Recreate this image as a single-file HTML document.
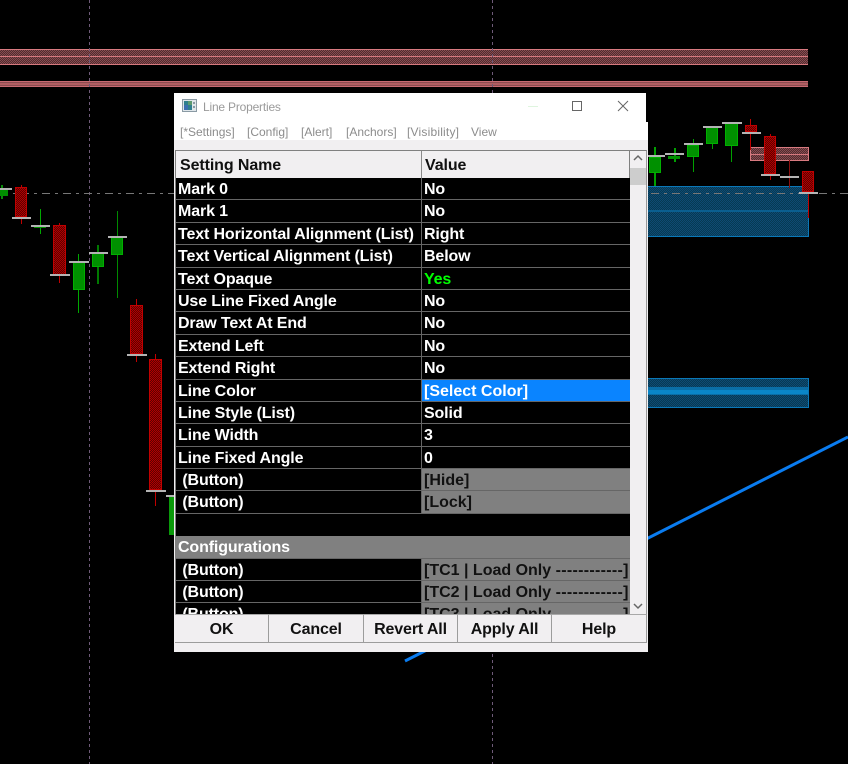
<!DOCTYPE html>
<html><head><meta charset="utf-8">
<style>
html,body{margin:0;padding:0;background:#000;width:848px;height:764px;overflow:hidden}
body{position:relative;font-family:"Liberation Sans",Arial,sans-serif}
svg.bg{position:absolute;left:0;top:0}
.tb{position:absolute;left:174px;top:93px;width:472px;height:29px;background:#fff}
.mn{position:absolute;left:174px;top:122px;width:474px;height:18px;background:#fff}
.body{position:absolute;left:174px;top:140px;width:474px;height:512px;background:#f1eff1}
.tt{position:absolute;left:203px;top:100px;font-size:12px;letter-spacing:-.2px;line-height:15px;color:#9a9a9a;white-space:nowrap}
.m{position:absolute;top:125px;font-size:12px;line-height:15px;color:#8c8c8c;white-space:nowrap}
.hdr{position:absolute;left:175px;top:150px;width:455px;height:28px;box-sizing:border-box;border:1px solid #808080;border-bottom:none;background:#f1eff1;font-weight:bold;font-size:16px;letter-spacing:-.1px;line-height:29px;color:#111}
.hdr span{position:absolute;top:0}
.hsep{position:absolute;left:421px;top:151px;width:1px;height:27px;background:#8a8a8a}
.grid{position:absolute;left:175px;top:178px;width:455px;height:436px;overflow:hidden;background:#000;border-left:1px solid #808080;box-sizing:border-box}
.r{position:relative;height:22.4px;box-sizing:border-box;border-bottom:1px solid #666;font-weight:bold;font-size:16px;letter-spacing:-.13px;line-height:23px;color:#fff;white-space:pre}
.r b{position:absolute;left:2px;top:0;font-weight:bold}
.r i{position:absolute;left:245px;top:0;bottom:0;right:0;font-style:normal;border-left:1px solid #666;padding-left:2px}
.r i.g{background:#808080;color:#111;letter-spacing:0}
.r i.s{background:#0a84ff;color:#fff;letter-spacing:0}
.r i.y{color:#00ff00}
.r i u{text-decoration:none;letter-spacing:.3px}
.r.c{background:#808080}
.r.b0{border-bottom-color:#000}
.sb{position:absolute;left:630px;top:150px;width:17px;height:464px;background:#f1eff1;border-right:1px solid #999;border-top:1px solid #808080;box-sizing:border-box}
.th{position:absolute;left:630px;top:168px;width:16px;height:17px;background:#cdcdcd}
.btn{position:absolute;top:614px;height:29px;box-sizing:border-box;background:#f1eff1;border-top:1px solid #a8a8a8;border-bottom:1px solid #9c9c9c;border-right:1px solid #9c9c9c;font-weight:bold;font-size:16px;letter-spacing:-.13px;line-height:29px;text-align:center;color:#111}
</style></head>
<body>
<svg class="bg" width="848" height="764" viewBox="0 0 848 764" shape-rendering="crispEdges">
<defs>
<pattern id="dr" width="2" height="2" patternUnits="userSpaceOnUse"><rect width="2" height="2" fill="#5c0000"/><rect width="1" height="1" fill="#b00000"/><rect x="1" y="1" width="1" height="1" fill="#b00000"/></pattern>
<pattern id="pb" width="2" height="2" patternUnits="userSpaceOnUse"><rect width="2" height="2" fill="#502c30"/><rect width="1" height="1" fill="#8a4c50"/><rect x="1" y="1" width="1" height="1" fill="#8a4c50"/></pattern>
<pattern id="bl" width="2" height="2" patternUnits="userSpaceOnUse"><rect width="2" height="2" fill="#063a52"/><rect width="1" height="1" fill="#0f4a74"/><rect x="1" y="1" width="1" height="1" fill="#0f4a74"/></pattern>
</defs>
<!-- top red bands -->
<rect x="0" y="49" width="808" height="16" fill="url(#pb)"/>
<rect x="0" y="49" width="808" height="1" fill="#d87a80"/><rect x="0" y="56" width="808" height="1" fill="#d87a80"/><rect x="0" y="64" width="808" height="1" fill="#d87a80"/>
<rect x="0" y="81" width="808" height="6" fill="#8a4c50"/>
<rect x="0" y="81" width="808" height="1" fill="#c96a72"/><rect x="0" y="86" width="808" height="1" fill="#c96a72"/><rect x="0" y="83" width="808" height="2" fill="#b05e62"/>
<!-- blue boxes -->
<rect x="648" y="186" width="160" height="50" fill="url(#bl)"/>
<rect x="648" y="186" width="160" height="1" fill="#0a78b8"/><rect x="648" y="210" width="160" height="2" fill="#0a5f90"/><rect x="648" y="236" width="161" height="1" fill="#0a78b8"/><rect x="808" y="186" width="1" height="51" fill="#0a78b8"/>
<rect x="648" y="378" width="160" height="30" fill="url(#bl)"/>
<rect x="648" y="378" width="160" height="1" fill="#0a78b8"/><rect x="648" y="407" width="161" height="1" fill="#0a78b8"/><rect x="808" y="378" width="1" height="30" fill="#0a78b8"/>
<rect x="648" y="387" width="160" height="8" fill="#0a6ea6"/><rect x="648" y="390" width="160" height="4" fill="#0a86c8"/>
<!-- red small box -->
<rect x="750" y="147" width="59" height="14" fill="url(#pb)"/>
<rect x="750" y="147" width="59" height="1" fill="#d87a80"/><rect x="750" y="154" width="59" height="1" fill="#d87a80"/><rect x="750" y="160" width="59" height="1" fill="#d87a80"/><rect x="750" y="147" width="1" height="14" fill="#d87a80"/><rect x="808" y="147" width="1" height="14" fill="#d87a80"/>
<!-- verticals -->
<line x1="89.5" y1="0" x2="89.5" y2="764" stroke="#6e5a78" stroke-dasharray="3 3"/>
<line x1="492.5" y1="0" x2="492.5" y2="764" stroke="#6e5a78" stroke-dasharray="3 3"/>
<!-- horiz dash -->
<line x1="0" y1="193.5" x2="848" y2="193.5" stroke="#777" stroke-dasharray="8 5 3 5"/>
<!-- green candles -->
<g fill="#009000">
<rect x="1" y="185" width="2" height="14" fill="#0a8a0a"/><rect x="0" y="189" width="8" height="7"/>
<rect x="40" y="209" width="1" height="25" fill="#00a800"/><rect x="34" y="226" width="12" height="2"/>
<rect x="78" y="254" width="1" height="59" fill="#00a800"/><rect x="73" y="262" width="12" height="28"/>
<rect x="97" y="245" width="2" height="39" fill="#007a00"/><rect x="92" y="253" width="12" height="14"/>
<rect x="117" y="211" width="1" height="87" fill="#008a00"/><rect x="111" y="237" width="12" height="18"/>
<rect x="169" y="497" width="5" height="38" fill="#0a9a0a"/>
<rect x="654" y="147" width="2" height="39" fill="#00a000"/><rect x="649" y="157" width="12" height="16"/>
<rect x="674" y="148" width="2" height="14" fill="#00a000"/><rect x="668" y="156" width="12" height="3"/>
<rect x="693" y="139" width="1" height="33" fill="#00a000"/><rect x="687" y="145" width="12" height="12"/>
<rect x="712" y="127" width="1" height="22" fill="#00a000"/><rect x="706" y="127" width="12" height="17"/>
<rect x="731" y="123" width="1" height="39" fill="#00a000"/><rect x="725" y="123" width="13" height="23"/>
</g>
<!-- red candles -->
<g fill="url(#dr)">
<rect x="21" y="185" width="1" height="39" fill="#c00000"/><rect x="15" y="187" width="12" height="30"/>
<rect x="59" y="223" width="1" height="60" fill="#c00000"/><rect x="53" y="225" width="13" height="50"/>
<rect x="136" y="299" width="1" height="63" fill="#c00000"/><rect x="130" y="305" width="13" height="49"/>
<rect x="155" y="354" width="1" height="152" fill="#c00000"/><rect x="149" y="359" width="13" height="131"/>
<rect x="750" y="119" width="1" height="31" fill="#c00000"/><rect x="745" y="125" width="12" height="7"/>
<rect x="770" y="134" width="1" height="46" fill="#c00000"/><rect x="764" y="136" width="12" height="38"/>
<rect x="789" y="160" width="1" height="28" fill="#8a1010"/>
<rect x="808" y="171" width="1" height="47" fill="#c00000"/><rect x="802" y="171" width="12" height="21"/>
</g>
<g fill="none" stroke="#c00000">
<rect x="15.5" y="187.5" width="11" height="29"/><rect x="53.5" y="225.5" width="12" height="49"/><rect x="130.5" y="305.5" width="12" height="48"/><rect x="149.5" y="359.5" width="12" height="130"/><rect x="745.5" y="125.5" width="11" height="6"/><rect x="764.5" y="136.5" width="11" height="37"/><rect x="802.5" y="171.5" width="11" height="20"/>
</g>
<g fill="none" stroke="#00b000">
<rect x="73.5" y="262.5" width="11" height="27"/><rect x="92.5" y="253.5" width="11" height="13"/><rect x="111.5" y="237.5" width="11" height="17"/><rect x="649.5" y="157.5" width="11" height="15"/><rect x="687.5" y="145.5" width="11" height="11"/><rect x="706.5" y="127.5" width="11" height="16"/><rect x="725.5" y="123.5" width="12" height="22"/>
</g>
<!-- ticks -->
<g fill="#b4b4b4">
<rect x="0" y="188" width="12" height="2"/><rect x="12" y="217" width="19" height="2"/><rect x="31" y="225" width="19" height="2"/><rect x="50" y="274" width="20" height="2"/><rect x="69" y="261" width="20" height="2"/><rect x="89" y="252" width="19" height="2"/><rect x="108" y="236" width="19" height="2"/><rect x="127" y="354" width="20" height="2"/><rect x="146" y="490" width="20" height="2"/><rect x="166" y="495" width="8" height="2"/>
<rect x="648" y="155" width="17" height="2"/><rect x="665" y="153" width="19" height="2"/><rect x="684" y="143" width="19" height="2"/><rect x="703" y="126" width="19" height="2"/><rect x="722" y="122" width="20" height="2"/><rect x="742" y="132" width="19" height="2"/><rect x="761" y="174" width="19" height="2"/><rect x="780" y="176" width="19" height="2"/><rect x="799" y="192" width="19" height="2"/>
</g>
<!-- trend line -->
<line x1="405" y1="661" x2="848" y2="437" stroke="#0a7cf0" stroke-width="3" shape-rendering="auto"/>
</svg>

<div class="body"></div>
<div class="tb"></div>
<div class="mn"></div>

<svg style="position:absolute;left:182px;top:99px" width="15" height="14" viewBox="0 0 15 14" shape-rendering="crispEdges">
<rect x="0.5" y="0.5" width="14" height="12" fill="#dfe6ea" stroke="#8a9aa4"/>
<rect x="2" y="2" width="8" height="9" fill="#2f7f8e"/><rect x="2" y="6" width="4" height="5" fill="#3d6fb0"/><rect x="6" y="2" width="4" height="4" fill="#5d9a70"/>
<rect x="11" y="3" width="2" height="2" fill="#8a9aa4"/><rect x="11" y="7" width="2" height="2" fill="#8a9aa4"/>
</svg>
<div class="tt">Line Properties</div>
<div style="position:absolute;left:528px;top:106px;width:10px;height:1px;background:#dff5df"></div>
<svg style="position:absolute;left:571px;top:100px" width="12" height="12" shape-rendering="crispEdges"><rect x="1.5" y="1.5" width="9" height="9" fill="none" stroke="#666"/></svg>
<svg style="position:absolute;left:617px;top:100px" width="12" height="12"><path d="M1 1L11 11M11 1L1 11" stroke="#666" stroke-width="1" fill="none"/></svg>

<div class="m" style="left:180px">[*Settings]</div>
<div class="m" style="left:247px">[Config]</div>
<div class="m" style="left:301px">[Alert]</div>
<div class="m" style="left:346px">[Anchors]</div>
<div class="m" style="left:407px;letter-spacing:.2px">[Visibility]</div>
<div class="m" style="left:471px">View</div>

<div class="hdr"><span style="left:4px">Setting Name</span><span style="left:249px">Value</span></div>
<div class="hsep"></div>

<div class="grid">
<div class="r"><b>Mark 0</b><i>No</i></div>
<div class="r"><b>Mark 1</b><i>No</i></div>
<div class="r"><b>Text Horizontal Alignment (List)</b><i>Right</i></div>
<div class="r"><b>Text Vertical Alignment (List)</b><i>Below</i></div>
<div class="r"><b>Text Opaque</b><i class="y">Yes</i></div>
<div class="r"><b>Use Line Fixed Angle</b><i>No</i></div>
<div class="r"><b>Draw Text At End</b><i>No</i></div>
<div class="r"><b>Extend Left</b><i>No</i></div>
<div class="r"><b>Extend Right</b><i>No</i></div>
<div class="r"><b>Line Color</b><i class="s">[Select Color]</i></div>
<div class="r"><b>Line Style (List)</b><i>Solid</i></div>
<div class="r"><b>Line Width</b><i>3</i></div>
<div class="r"><b>Line Fixed Angle</b><i>0</i></div>
<div class="r"><b> (Button)</b><i class="g">[Hide]</i></div>
<div class="r"><b> (Button)</b><i class="g">[Lock]</i></div>
<div class="r b0"></div>
<div class="r c"><b>Configurations</b></div>
<div class="r"><b> (Button)</b><i class="g">[TC1 | Load Only <u>------------]</u></i></div>
<div class="r"><b> (Button)</b><i class="g">[TC2 | Load Only <u>------------]</u></i></div>
<div class="r"><b> (Button)</b><i class="g">[TC3 | Load Only <u>------------]</u></i></div>
</div>

<div class="sb"></div>
<div class="th"></div>
<svg style="position:absolute;left:632px;top:153px" width="12" height="10"><path d="M2 7L6 3L10 7" stroke="#666" stroke-width="1.5" fill="none"/></svg>
<svg style="position:absolute;left:632px;top:601px" width="12" height="10"><path d="M2 3L6 7L10 3" stroke="#666" stroke-width="1.5" fill="none"/></svg>

<div class="btn" style="left:175px;width:94px">OK</div>
<div class="btn" style="left:269px;width:95px">Cancel</div>
<div class="btn" style="left:364px;width:94px">Revert All</div>
<div class="btn" style="left:458px;width:94px">Apply All</div>
<div class="btn" style="left:552px;width:95px">Help</div>
</body></html>
